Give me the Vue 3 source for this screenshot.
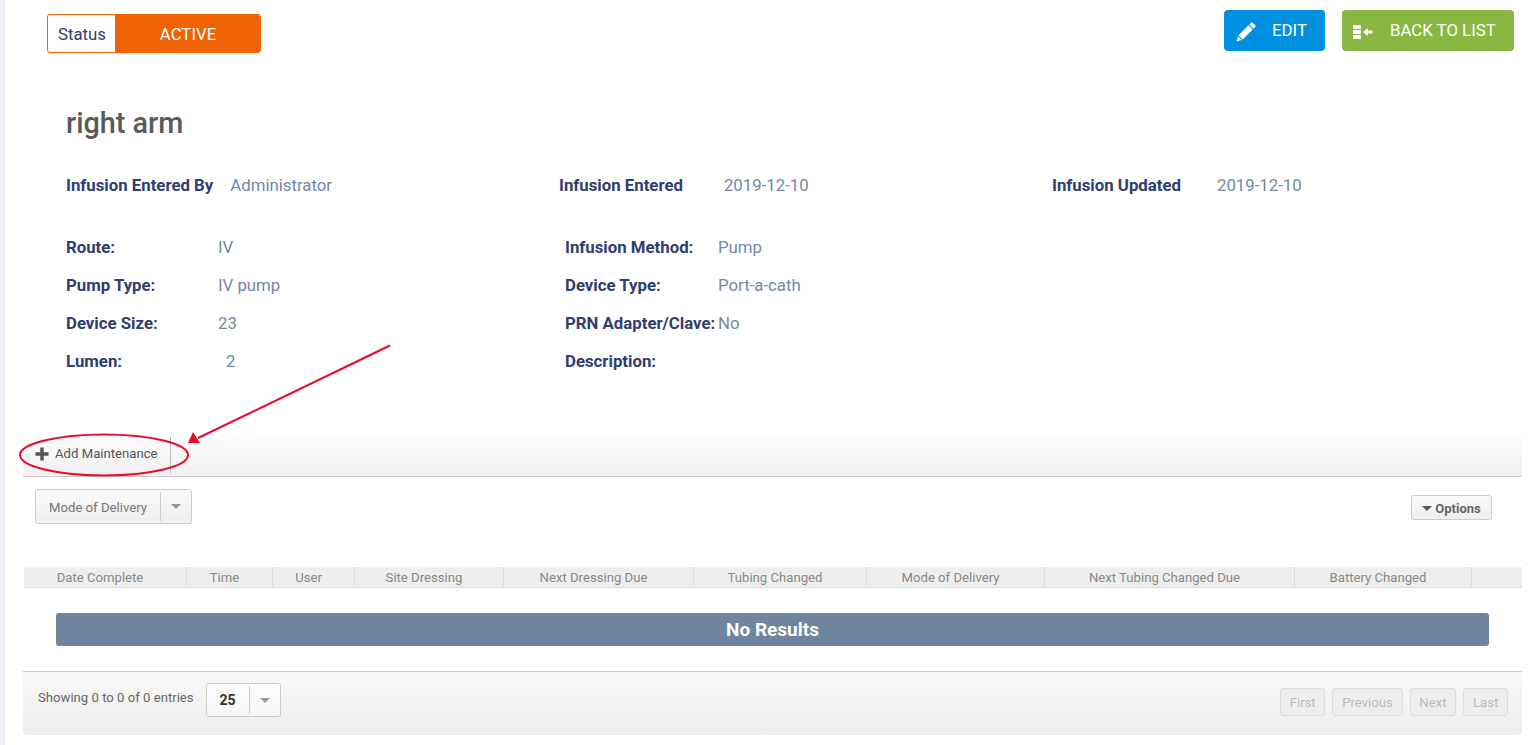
<script setup>
const meta = [
  { label: 'Infusion Entered By', value: 'Administrator' },
  { label: 'Infusion Entered', value: '2019-12-10' },
  { label: 'Infusion Updated', value: '2019-12-10' }
]
const rows = [
  ['Route:', 'IV', 'Infusion Method:', 'Pump'],
  ['Pump Type:', 'IV pump', 'Device Type:', 'Port-a-cath'],
  ['Device Size:', '23', 'PRN Adapter/Clave:', 'No'],
  ['Lumen:', '2', 'Description:', '']
]
const columns = [
  ['Date Complete', 163], ['Time', 86], ['User', 82], ['Site Dressing', 149], ['Next Dressing Due', 190],
  ['Tubing Changed', 173], ['Mode of Delivery', 178], ['Next Tubing Changed Due', 250], ['Battery Changed', 177], ['', 51]
]
const pages = ['First', 'Previous', 'Next', 'Last']
</script>

<template>
  <div class="page">
    <aside class="strip"></aside>
    <main class="main">
      <header class="top">
        <div class="status">
          <span class="status-label">Status</span>
          <span class="status-value">ACTIVE</span>
        </div>
        <div class="actions">
          <button class="btn edit">
            <svg class="btn-icon" width="20" height="20" viewBox="0 0 20 20"><path fill="#fff" d="M15 .8a1.200 1.200 0 0 1 1.700 0l2.500 2.500a1.200 1.200 0 0 1 0 1.700l-1.700 1.700-4.200-4.200zM12.500 3.300l4.200 4.200L6.700 17.500l-4.200-4.200zM1.900 14.300l3.800 3.800L.4 19.600z"/></svg>
            <span>EDIT</span>
          </button>
          <button class="btn back">
            <svg class="btn-icon" width="20" height="16" viewBox="0 0 20 16"><g fill="#fff"><rect x="0" y="1" width="8" height="4" rx=".5"/><rect x="0" y="6" width="8" height="4" rx=".5"/><rect x="0" y="11" width="8" height="4" rx=".5"/><path d="M10 8l5-4v2.500h4.500v3H15V12z"/></g></svg>
            <span>BACK TO LIST</span>
          </button>
        </div>
      </header>

      <h1 class="title">right arm</h1>

      <section class="meta">
        <div v-for="m in meta" :key="m.label" class="meta-item">
          <strong>{{ m.label }}</strong>
          <span>{{ m.value }}</span>
        </div>
      </section>

      <section class="details">
        <div v-for="r in rows" :key="r[0]" class="detail-row">
          <strong class="l1">{{ r[0] }}</strong>
          <span class="v1" :class="{ indented: r[0] === 'Lumen:' }">{{ r[1] }}</span>
          <strong class="l2">{{ r[2] }}</strong>
          <span class="v2">{{ r[3] }}</span>
        </div>
      </section>

      <section class="grid-panel">
        <div class="toolbar">
          <div class="add">
            <svg class="add-icon" width="14" height="14" viewBox="0 0 14 14"><path fill="#555" d="M5.300 0.500h3.400v4.800h4.800v3.400H8.700v4.800H5.300V8.700H0.500V5.300h4.800z"/></svg>
            <span>Add Maintenance</span>
          </div>
        </div>

        <div class="controls">
          <div class="select mode">
            <span class="select-text">Mode of Delivery</span>
            <span class="select-caret"><i class="caret"></i></span>
          </div>
          <button class="options"><i class="caret dark"></i>Options</button>
        </div>

        <div class="thead">
          <div v-for="c in columns" :key="c[0]" class="th" :style="{ width: c[1] + 'px' }">{{ c[0] }}</div>
        </div>

        <div class="results">No Results</div>

        <footer class="pager">
          <span class="showing">Showing 0 to 0 of 0 entries</span>
          <div class="select size">
            <span class="select-text">25</span>
            <span class="select-caret"><i class="caret"></i></span>
          </div>
          <div class="pages">
            <button v-for="p in pages" :key="p" class="page-btn">{{ p }}</button>
          </div>
        </footer>
      </section>

      <svg class="annotation" width="400" height="150" viewBox="0 0 400 150">
        <ellipse cx="99" cy="113" rx="84" ry="20.500" fill="none" stroke="#ea0a2a" stroke-width="2"/>
        <line x1="385" y1="3.500" x2="193" y2="96" stroke="#ea0a2a" stroke-width="2"/>
        <path d="M183 101 L188 90 L195 101 Z" fill="#ea0a2a"/>
      </svg>
    </main>
  </div>
</template>

<style>
html, body { margin: 0; background: #fff; }
</style>

<style scoped>
.page { display: flex; height: 745px; overflow: hidden; font-family: Roboto, "Liberation Sans", sans-serif; background: #fff; }
.strip { width: 5px; flex: none; background: #eef0f6; }
.main { position: relative; width: 1517px; flex: none; }

.top { display: flex; justify-content: space-between; align-items: flex-start; padding: 10px 8px 0 42px; height: 60px; box-sizing: border-box; }
.status { display: flex; width: 214px; height: 39px; margin-top: 4px; border: 1px solid #f06305; border-radius: 3px; box-sizing: border-box; overflow: hidden; }
.status-label { width: 67px; display: flex; align-items: center; justify-content: center; padding: 1px 0 0 1px; box-sizing: border-box; font-size: 16.800px; color: #2f3e6e; }
.status-value { flex: 1; background: #f06305; color: #fff; font-size: 16.800px; font-weight: 400; padding: 1px 0 0 1px; display: flex; align-items: center; justify-content: center; }
.actions { display: flex; gap: 17px; }
.btn { height: 41px; border: 0; border-radius: 4px; color: #fff; font: 400 16.800px Roboto, sans-serif; display: flex; align-items: center; padding: 0 0 1px; box-sizing: border-box; }
.btn-icon { margin-top: 4px; }
.edit { width: 101px; background: #0090e0; padding-left: 12px; gap: 16px; }
.back { width: 172px; background: #88b841; padding-left: 11px; gap: 17px; }

.title { margin: 45px 0 0; padding: 0 0 0 61px; font-size: 28.800px; font-weight: 500; color: #5a5a5a; line-height: 36px; height: 36px; }
.meta { display: flex; padding: 0 0 0 61px; margin-top: 34px; height: 20px; line-height: 20px; font-size: 16.800px; }
.meta-item { width: 493px; flex: none; display: flex; }
.meta-item strong { font-weight: 700; color: #2f3e6e; margin-right: 17px; }
.meta-item:nth-child(2) strong { margin-right: 41px; }
.meta-item:nth-child(3) strong { margin-right: 36px; }
.meta-item span { color: #7288a8; }

.details { margin-top: 33px; padding-left: 61px; font-size: 16.800px; }
.detail-row { display: grid; grid-template-columns: 152px 347px 153px 1fr; height: 38px; line-height: 38px; }
.detail-row strong { font-weight: 700; color: #2f3e6e; white-space: nowrap; }
.detail-row span { color: #7288a8; }
.indented { padding-left: 8px; }

.grid-panel { margin-top: 57px; margin-left: 18px; width: 1499px; }
.toolbar { height: 39px; border-bottom: 1px solid #ccc; background: linear-gradient(#fbfbfb, #f0f0f0); }
.add { width: 148px; height: 36px; display: flex; align-items: center; gap: 6px; border-right: 1px solid #bbb; padding: 0 0 4px 12px; box-sizing: border-box; font-size: 13.150px; color: #555; }
.add-icon { margin-top: 2px; }
.controls { display: flex; justify-content: space-between; align-items: flex-start; padding: 12px 30px 0 12px; height: 78px; }
.select { display: flex; border: 1px solid #ccc; border-radius: 3px; background: linear-gradient(#fafafa, #eee); box-sizing: border-box; }
.mode { width: 157px; height: 35px; }
.mode .select-text { padding-top: 1px; }
.select-text { flex: 1; display: flex; align-items: center; justify-content: center; font-size: 13.150px; color: #777; }
.select-caret { width: 30px; display: flex; align-items: center; justify-content: center; margin: 2px 0; border-left: 1px solid #ccc; }
.caret { display: inline-block; width: 0; height: 0; border-left: 5px solid transparent; border-right: 5px solid transparent; border-top: 5px solid #999; }
.caret.dark { border-top-color: #555; margin-right: 3px; }
.options { margin-top: 6px; width: 81px; height: 25px; padding: 1px 0 0; border: 1px solid #ccc; border-radius: 3px; background: linear-gradient(#fafafa, #eee); font: 700 13px Roboto, sans-serif; color: #666; display: flex; align-items: center; justify-content: center; }

.thead { display: flex; height: 21px; margin-left: 1px; background: #eee; border-bottom: 1px solid #ddd; box-sizing: border-box; }
.th { flex: none; box-sizing: border-box; border-right: 1px solid #ddd; padding-right: 10px; text-align: center; font-size: 13.150px; line-height: 21px; color: #888; }
.th:last-child { border-right: 0; }

.results { margin: 25px 33px 0; height: 33px; border-radius: 3px; background: #6f859e; color: #fff; font-size: 19px; font-weight: 700; text-align: center; line-height: 33px; }

.pager { margin-top: 25px; height: 64px; box-sizing: border-box; border-top: 1px solid #ccc; border-radius: 0 0 4px 4px; background: linear-gradient(#f8f8f8, #eee); display: flex; align-items: flex-start; padding: 11px 0 0 15px; }
.showing { font-size: 13.150px; color: #666; line-height: 28px; padding-top: 1px; }
.size { width: 75px; height: 34px; margin-left: 12px; background: linear-gradient(#fdfdfd, #f5f5f5); }
.size .select-text { font-size: 14px; font-weight: 700; color: #333; }
.pages { display: flex; gap: 7px; margin-left: auto; margin-right: 14px; margin-top: 5px; }
.page-btn { height: 28px; padding: 0 8.750px; border: 1px solid #ddd; border-radius: 3px; background: #eee; color: #bbb; font: 400 13.150px Roboto, sans-serif; }

.annotation { position: absolute; left: 0; top: 342px; pointer-events: none; }
</style>
